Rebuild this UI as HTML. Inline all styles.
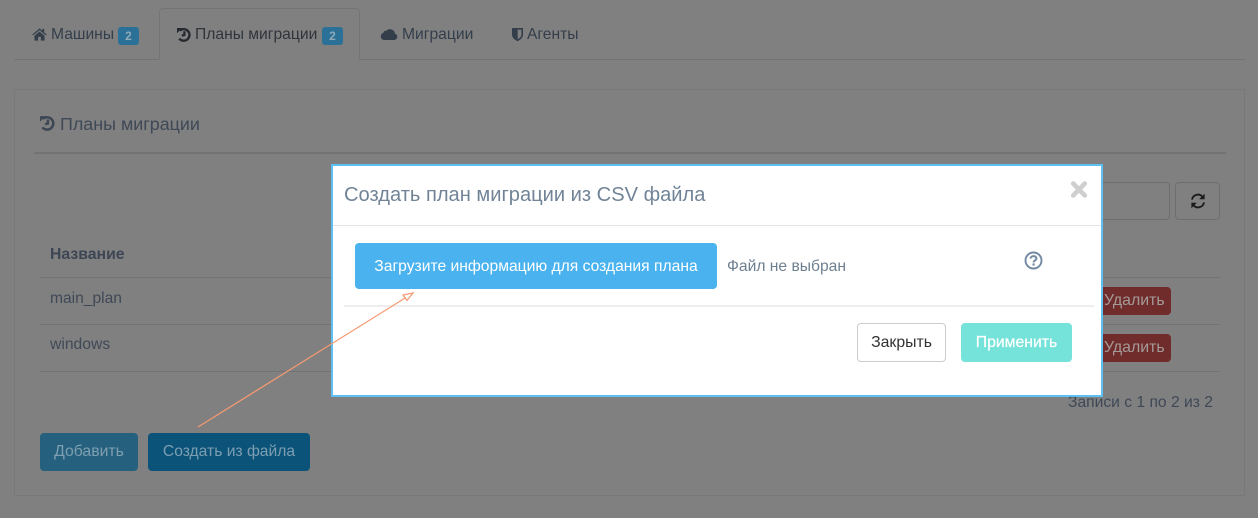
<!DOCTYPE html>
<html><head><meta charset="utf-8"><style>
html,body{margin:0;padding:0}
body{width:1258px;height:518px;background:#808080;position:relative;overflow:hidden;font-family:"Liberation Sans",sans-serif;font-size:14px}
.a{position:absolute;white-space:nowrap}
.b{position:absolute;box-sizing:border-box;border-radius:4px}
.t{font-size:15.65px;color:#343e4b;line-height:20px}
.badge{position:absolute;background:#2b7097;border-radius:3px;color:#8fa9b8;font-size:12px;font-weight:bold;text-align:center;width:21px;height:18px;line-height:18px;top:27px}
.ln{position:absolute;background:#737373;height:1px}
.c{position:absolute;text-align:center;white-space:nowrap}
</style></head><body>
<div class="ln" style="left:14px;top:59px;width:1231px"></div>
<div class="b" style="left:159px;top:8px;width:201px;height:52px;border:1px solid #747474;border-bottom:1px solid #808080;border-radius:4px 4px 0 0"></div>

<svg class="a" style="left:32px;top:28px" width="15" height="13" viewBox="0 0 16 14"><path fill="#343e4b" d="M8 0.4 L0.3 7 L1.2 8 L8 2.3 L14.8 8 L15.7 7 L13 4.7 V1 H11 V3 Z M2.6 8.4 V13.6 H6.5 V9.6 H9.5 V13.6 H13.4 V8.4 L8 3.8 Z"/></svg>
<div class="a t" style="left:51px;top:25px">Машины</div>
<div class="badge" style="left:118px">2</div>

<svg class="a" style="left:176px;top:27px" width="16" height="15" viewBox="0 0 16 15"><path fill="none" stroke="#25292f" stroke-width="2.3" d="M3.8 3.6 A5.8 5.8 0 1 1 3.2 11.6 M8.4 4.2 V7.9 L5.8 8.6"/><path fill="#25292f" d="M1 1 L6.2 1 L1 6.2 Z"/></svg>
<div class="a t" style="left:195px;top:25px;color:#2f343b">Планы миграции</div>
<div class="badge" style="left:322px">2</div>

<svg class="a" style="left:380px;top:27px" width="18" height="14" viewBox="0 0 18 14"><path fill="#343e4b" d="M4.2 13 A3.6 3.6 0 0 1 3.2 6 A3 3 0 0 1 6.4 3.8 A5 5 0 0 1 15 6.6 A3.3 3.3 0 0 1 14.4 13 Z"/></svg>
<div class="a t" style="left:402px;top:25px">Миграции</div>

<svg class="a" style="left:511px;top:27px" width="13" height="15" viewBox="0 0 13 15"><path fill="#343e4b" d="M1 1 H12 V7.5 C12 11 9 13 6.5 14.3 C4 13 1 11 1 7.5 Z"/><path fill="#808080" d="M6.7 2.6 H10.4 V7.5 C10.4 9.6 8.6 11.2 6.7 12.3 Z"/></svg>
<div class="a t" style="left:527px;top:25px">Агенты</div>

<div class="b" style="left:14px;top:89px;width:1231px;height:407px;border:1px solid #787878;border-radius:2px"></div>

<svg class="a" style="left:39px;top:115px" width="17" height="16" viewBox="0 0 16 15"><path fill="none" stroke="#3d4654" stroke-width="2.3" d="M3.8 3.6 A5.8 5.8 0 1 1 3.2 11.6 M8.4 4.2 V7.9 L5.8 8.6"/><path fill="#3d4654" d="M1 1 L6.2 1 L1 6.2 Z"/></svg>
<div class="a" style="left:60px;top:113px;font-size:17.9px;line-height:22px;color:#3f4856">Планы миграции</div>
<div class="a" style="left:34px;top:152px;width:1192px;height:2px;background:#737373"></div>

<div class="b" style="left:1000px;top:182px;width:170px;height:38px;border:1px solid #6e6e6e"></div>
<div class="b" style="left:1175px;top:182px;width:45px;height:38px;border:1px solid #6e6e6e"></div>
<svg class="a" style="left:1190px;top:193px" width="16" height="16" viewBox="0 0 16 16"><path fill="none" stroke="#1a1a1a" stroke-width="1.8" d="M2 6.6 A6 6 0 0 1 12.4 3.6 M14 9.4 A6 6 0 0 1 3.6 12.4"/><path fill="#1a1a1a" d="M14.6 0.8 V6.2 H9.2 Z M1.4 15.2 V9.8 H6.8 Z"/></svg>

<div class="a" style="left:50px;top:245px;font-size:15.8px;line-height:20px;font-weight:bold;color:#3d4654">Название</div>
<div class="ln" style="left:40px;top:277px;width:1180px"></div>
<div class="a" style="left:50px;top:289px;font-size:15.6px;line-height:20px;color:#3f4856">main_plan</div>
<div class="ln" style="left:40px;top:324px;width:1180px"></div>
<div class="a" style="left:50px;top:335px;font-size:15.7px;line-height:20px;color:#3f4856">windows</div>
<div class="ln" style="left:40px;top:371px;width:1180px"></div>

<div class="b" style="left:1090px;top:287px;width:81px;height:28px;background:#6f2c2a"></div>
<div class="a" style="left:1104px;top:291px;font-size:15.9px;line-height:20px;color:#a49a99">Удалить</div>
<div class="b" style="left:1090px;top:334px;width:81px;height:28px;background:#6f2c2a"></div>
<div class="a" style="left:1104px;top:338px;font-size:15.9px;line-height:20px;color:#a49a99">Удалить</div>

<div class="a" style="left:1068px;top:393px;font-size:15.65px;line-height:20px;color:#3f4856">Записи с 1 по 2 из 2</div>

<div class="b c" style="left:40px;top:433px;width:98px;height:38px;line-height:38px;background:#25617f;color:#7f9fb0;font-size:15.8px">Добавить</div>
<div class="b c" style="left:148px;top:433px;width:162px;height:38px;line-height:38px;background:#0c5379;color:#7d9eb1;font-size:15.65px">Создать из файла</div>

<div class="a" style="left:331px;top:164px;width:772px;height:233px;box-sizing:border-box;border:2px solid #5cc1f2;background:#fff"></div>
<div class="a" style="left:344px;top:183px;font-size:20.1px;line-height:24px;color:#718497">Создать план миграции из CSV файла</div>
<svg class="a" style="left:1070px;top:180px" width="18" height="19" viewBox="0 0 18 19"><path stroke="#cfcfcf" stroke-width="4.6" stroke-linecap="round" d="M3.2 3.5 L14.8 15.5 M14.8 3.5 L3.2 15.5"/></svg>
<div class="a" style="left:333px;top:225px;width:768px;height:1px;background:#e5e5e5"></div>

<div class="b c" style="left:355px;top:243px;width:362px;height:46px;line-height:47px;background:#4ab2ef;color:#fff;font-size:15.67px">Загрузите информацию для создания плана</div>
<div class="a" style="left:727px;top:257px;font-size:15.65px;line-height:20px;color:#6e7f90">Файл не выбран</div>
<svg class="a" style="left:1024px;top:251px" width="19" height="19" viewBox="0 0 19 19"><circle cx="9.5" cy="9.5" r="8" fill="none" stroke="#7388a2" stroke-width="1.9"/><path fill="none" stroke="#7388a2" stroke-width="2" d="M6.5 7.6 C6.7 4.4 12.4 4.4 12.4 7.4 C12.4 9.4 9.6 9.4 9.6 11.4"/><rect x="8.5" y="12.4" width="2.2" height="2.2" fill="#7388a2"/></svg>
<div class="a" style="left:344px;top:305px;width:750px;height:2px;background:#eeeeee"></div>

<div class="b c" style="left:857px;top:323px;width:89px;height:39px;line-height:37px;border:1px solid #ccc;background:#fff;color:#333;font-size:15.8px">Закрыть</div>
<div class="b c" style="left:961px;top:323px;width:111px;height:39px;line-height:39px;background:#76e3da;color:#fff;font-size:15.75px;-webkit-text-stroke:.2px #fff">Применить</div>

<svg class="a" style="left:0;top:0" width="1258" height="518"><path fill="none" stroke="#f79a72" stroke-width="1.2" d="M198 427 L406 297.5 M413 293 L403 295 L407 300.5 Z"/></svg>
</body></html>
